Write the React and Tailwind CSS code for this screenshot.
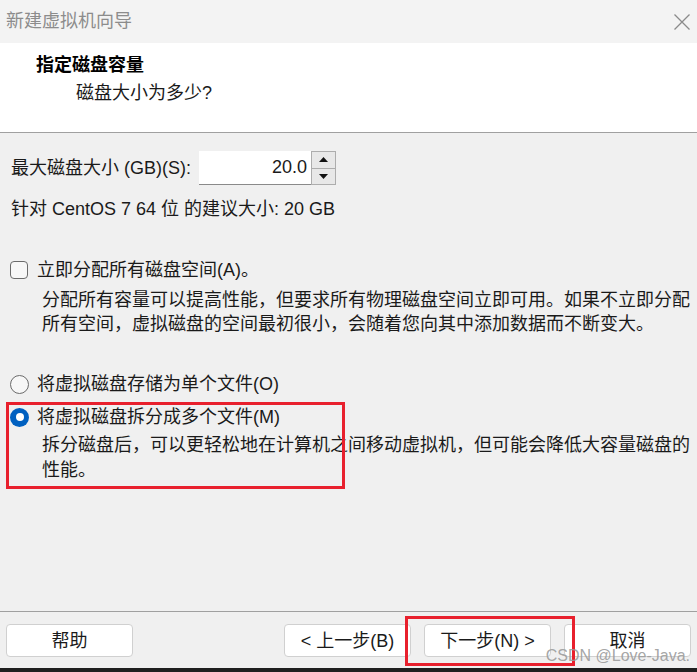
import React from 'react';

const font = { fontFamily: '"Liberation Sans", "Noto Sans CJK SC", sans-serif' };

const Checkbox = () => (
  <span className="w-[18px] h-[18px] rounded-[4px] border border-[#6b6b6b] bg-[#f7f7f7] shrink-0" />
);

const Radio = ({ checked }) =>
  checked ? (
    <span className="w-[19px] h-[19px] rounded-full bg-[#0060c0] flex items-center justify-center shrink-0">
      <span className="w-[8px] h-[8px] rounded-full bg-white" />
    </span>
  ) : (
    <span className="w-[19px] h-[19px] rounded-full border border-[#6b6b6b] bg-[#f7f7f7] shrink-0" />
  );

const Button = ({ children, className = '' }) => (
  <button className={`h-[33px] bg-white border border-[#d0d0d0] rounded-[4px] text-[18px] text-[#1a1a1a] leading-none ${className}`}>
    {children}
  </button>
);

const App = () => {
  return (
    <div className="relative w-[697px] h-[672px] overflow-hidden flex flex-col bg-[#f0f0f0] text-[18px] text-[#1a1a1a]" style={font}>
      {/* title bar */}
      <div className="h-[43px] bg-[#f3f3f3] flex items-center justify-between pl-[6px] pr-[7px]">
        <span className="text-[#8c8c8c] text-[18px]">新建虚拟机向导</span>
        <svg width="16" height="16" viewBox="0 0 16 16" className="mt-[1px]">
          <path d="M0.5 0.5 L15.5 15.5 M15.5 0.5 L0.5 15.5" stroke="#8a8a8a" strokeWidth="1.3" fill="none" />
        </svg>
      </div>

      {/* header */}
      <div className="h-[90px] bg-white border-b border-[#a0a0a0] pl-[36px] pt-[10px]">
        <p className="font-bold leading-[24px] text-black">指定磁盘容量</p>
        <p className="leading-[24px] mt-[4px] pl-[40px] text-[#1a1a1a]">磁盘大小为多少?</p>
      </div>

      {/* body */}
      <div className="flex-1 pl-[10px] pt-[18px]">
        <div className="flex items-center">
          <span className="w-[189px] pl-[1px] whitespace-nowrap">最大磁盘大小 (GB)(S):</span>
          <div className="w-[112px] h-[34px] bg-white border-b border-[#8a8a8a] flex items-center justify-end pr-[4px]">
            20.0
          </div>
          <div className="w-[25px] h-[34px] flex flex-col border border-[#adadad] bg-[#e8e8e8]">
            <div className="flex-1 flex items-center justify-center border-b border-[#adadad]">
              <svg width="9" height="5" viewBox="0 0 9 5"><path d="M4.5 0 L9 5 L0 5 Z" fill="#111" /></svg>
            </div>
            <div className="flex-1 flex items-center justify-center">
              <svg width="9" height="5" viewBox="0 0 9 5"><path d="M0 0 L9 0 L4.5 5 Z" fill="#111" /></svg>
            </div>
          </div>
        </div>

        <p className="mt-[12px] pl-[1px] leading-[24px] whitespace-nowrap">针对 CentOS 7 64 位 的建议大小: 20 GB</p>

        <div className="mt-[37px] flex items-center gap-[9px] leading-[24px]">
          <Checkbox />
          <span>立即分配所有磁盘空间(A)。</span>
        </div>
        <p className="mt-[6px] pl-[32px] leading-[24px] whitespace-nowrap">
          分配所有容量可以提高性能，但要求所有物理磁盘空间立即可用。如果不立即分配
          <br />
          所有空间，虚拟磁盘的空间最初很小，会随着您向其中添加数据而不断变大。
        </p>

        <div className="mt-[36px] flex items-center gap-[8px] leading-[24px]">
          <Radio />
          <span>将虚拟磁盘存储为单个文件(O)</span>
        </div>
        <div className="mt-[9px] flex items-center gap-[8px] leading-[24px]">
          <Radio checked />
          <span>将虚拟磁盘拆分成多个文件(M)</span>
        </div>
        <p className="mt-[4px] pl-[32px] leading-[25px] whitespace-nowrap">
          拆分磁盘后，可以更轻松地在计算机之间移动虚拟机，但可能会降低大容量磁盘的
          <br />
          性能。
        </p>
      </div>

      {/* footer */}
      <div className="h-[57px] border-t border-[#a0a0a0] flex justify-between pt-[12px] px-[6px]">
        <Button className="w-[127px]">帮助</Button>
        <div className="flex gap-[13px]">
          <Button className="w-[127px]">&lt; 上一步(B)</Button>
          <Button className="w-[127px]">下一步(N) &gt;</Button>
          <Button className="w-[127px]">取消</Button>
        </div>
      </div>
      <div className="h-[4px] bg-[#1f1f1f]" />

      {/* annotations */}
      <div className="absolute left-[6px] top-[402px] w-[339px] h-[87px] border-[3px] border-[#e8202d]" />
      <div className="absolute left-[405px] top-[616px] w-[170px] h-[50px] border-[3px] border-[#e8202d]" />
      <span className="absolute right-[7px] top-[646px] text-[16px] text-[#9b9b9b]/90 leading-[20px] whitespace-nowrap">
        CSDN @Love-Java.
      </span>
    </div>
  );
};

export default App;
